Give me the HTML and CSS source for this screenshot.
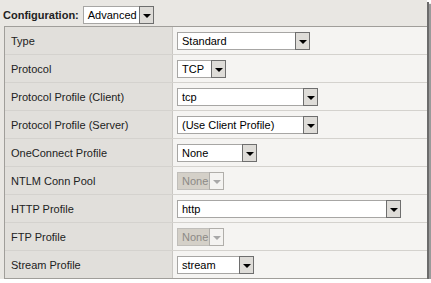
FILE: index.html
```html
<!DOCTYPE html>
<html lang="en">
<head>
    <meta charset="UTF-8">
    <title>Configuration</title>
    <link rel="stylesheet" href="styles.css">
</head>
<body>
    <div class="shot">
        <div class="config-bar">
            <span class="config-label">Configuration:</span>
            <span class="sel w-adv"><span class="val">Advanced</span><span class="btn"></span></span>
        </div>
        <div class="props">
            <div class="row">
                <div class="name">Type</div>
                <div class="field"><span class="sel w-type"><span class="val">Standard</span><span class="btn"></span></span></div>
            </div>
            <div class="row">
                <div class="name">Protocol</div>
                <div class="field"><span class="sel w-proto"><span class="val">TCP</span><span class="btn"></span></span></div>
            </div>
            <div class="row">
                <div class="name">Protocol Profile (Client)</div>
                <div class="field"><span class="sel w-client"><span class="val">tcp</span><span class="btn"></span></span></div>
            </div>
            <div class="row">
                <div class="name">Protocol Profile (Server)</div>
                <div class="field"><span class="sel w-client"><span class="val">(Use Client Profile)</span><span class="btn"></span></span></div>
            </div>
            <div class="row">
                <div class="name">OneConnect Profile</div>
                <div class="field"><span class="sel w-one"><span class="val">None</span><span class="btn"></span></span></div>
            </div>
            <div class="row">
                <div class="name">NTLM Conn Pool</div>
                <div class="field"><span class="sel disabled w-off"><span class="val">None</span><span class="btn"></span></span></div>
            </div>
            <div class="row">
                <div class="name">HTTP Profile</div>
                <div class="field"><span class="sel w-http"><span class="val">http</span><span class="btn"></span></span></div>
            </div>
            <div class="row">
                <div class="name">FTP Profile</div>
                <div class="field"><span class="sel disabled w-off"><span class="val">None</span><span class="btn"></span></span></div>
            </div>
            <div class="row last">
                <div class="name">Stream Profile</div>
                <div class="field"><span class="sel w-stream"><span class="val">stream</span><span class="btn"></span></span></div>
            </div>
        </div>
    </div>
</body>
</html>
```

FILE: styles.css
```css
body {
    margin: 0;
    padding: 0;
    background-color: #fff;
    font-family: "Liberation Sans", Arial, sans-serif;
    font-size: 11px;
    color: #222;
}
.shot {
    width: 427px;
    height: 279px;
    background-color: #e9e7e3;
    box-shadow: 2px 2px 0 #6b6b6b, 4px 4px 1px #9a9a9a;
    overflow: hidden;
}
.config-bar {
    height: 26px;
    display: flex;
    align-items: center;
    padding-left: 3px;
    gap: 4px;
}
.config-label {
    font-weight: bold;
    margin-top: 4px;
}
.props {
    margin-left: 4px;
    border-left: 1px solid #a09e9a;
    border-top: 1px solid #a09e9a;
    border-bottom: 1px solid #a09e9a;
}
.row {
    display: grid;
    grid-template-columns: 168px 1fr;
    height: 27px;
    border-bottom: 1px solid #d4d2ce;
}
.row.last {
    border-bottom: none;
}
.name {
    background-color: #e1dfdb;
    border-right: 1px solid #c9c7c3;
    padding-left: 6px;
    display: flex;
    align-items: center;
}
.field {
    background-color: #f5f4f2;
    padding-left: 4px;
    display: flex;
    align-items: center;
}
.sel {
    display: inline-flex;
    height: 16px;
    background-color: #fff;
    border: 1px solid #a7a6a4;
    border-right: none;
    color: #000;
}
.sel .val {
    flex: 1;
    padding-left: 4px;
    line-height: 16px;
}
.sel .btn {
    width: 13px;
    border: 1px solid #6e6e6e;
    margin-top: -1px;
    margin-bottom: -1px;
    background-color: #dedcd8;
    position: relative;
}
.sel .btn::after {
    content: "";
    position: absolute;
    left: 3px;
    top: 7px;
    border-left: 4px solid transparent;
    border-right: 4px solid transparent;
    border-top: 4px solid #000;
}
.sel.disabled {
    background-color: #d4d0c8;
    color: #8c8a86;
    border-color: #c0beba;
}
.sel.disabled .btn {
    background-color: #f4f3f1;
    border-color: #b0aeaa;
}
.sel.disabled .btn::after {
    border-top-color: #a8a8a8;
}
.w-adv { width: 70px; margin-top: 4px; }
.w-type { width: 132px; }
.w-proto { width: 48px; }
.w-client { width: 140px; }
.w-one { width: 79px; }
.w-off { width: 46px; }
.w-http { width: 223px; }
.w-stream { width: 76px; }
```
